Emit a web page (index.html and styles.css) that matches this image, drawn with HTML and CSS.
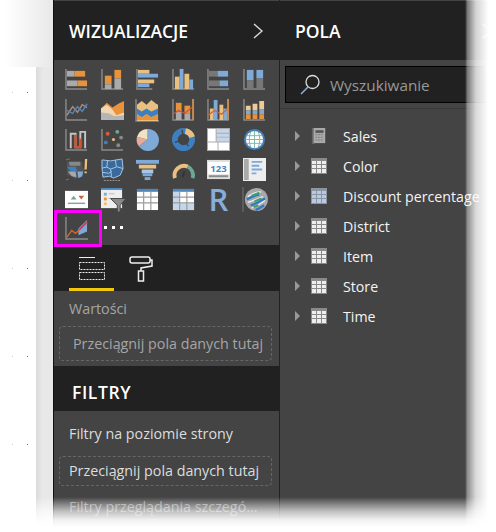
FILE: index.html
```html
<!DOCTYPE html>
<html>

<head>
    <title>Wizualizacje i pola</title>
    <link rel="stylesheet" href="styles.css">
</head>

<body>
    <div class="screen">

        <div class="canvas">
            <div class="canvas-top"></div>
            <div class="canvas-row">
                <div class="page">
                    <div class="dots"><i></i><i></i></div>
                    <div class="dots"><i></i><i></i></div>
                    <div class="dots"><i></i><i></i></div>
                    <div class="dots"><i></i><i></i></div>
                    <div class="dots"><i></i><i></i></div>
                </div>
                <div class="gutter"></div>
            </div>
        </div>

        <aside class="viz">
            <header class="head">
                <h2>WIZUALIZACJE</h2>
                <svg class="chev" width="12" height="18" viewBox="0 0 12 18"><path d="M2 2l8 7-8 7" fill="none" stroke="#cfd8e0" stroke-width="1.4"/></svg>
            </header>

            <div class="gallery">
                <!-- row 1 -->
                <svg viewBox="0 0 24 24"><path d="M1 1v21h22" class="axis"/><rect x="2" y="3" width="8" height="6" fill="#aaa"/><rect x="10" y="3" width="11" height="6" fill="#e8923c"/><rect x="2" y="13" width="11" height="6" fill="#aaa"/><rect x="13" y="13" width="10" height="6" fill="#e8923c"/></svg>
                <svg viewBox="0 0 24 24"><path d="M1 1v21h22" class="axis"/><rect x="4" y="8" width="7" height="9" fill="#e8923c"/><rect x="4" y="17" width="7" height="5" fill="#aaa"/><rect x="14" y="2" width="7" height="9" fill="#e8923c"/><rect x="14" y="11" width="7" height="11" fill="#aaa"/></svg>
                <svg viewBox="0 0 24 24"><path d="M1 1v21h16" class="axis"/><rect x="2" y="2" width="12" height="4" fill="#e9c07f"/><rect x="2" y="6" width="21" height="4" fill="#7fa9d6"/><rect x="2" y="12" width="17" height="4" fill="#e9c07f"/><rect x="2" y="16" width="12" height="4" fill="#7fa9d6"/></svg>
                <svg viewBox="0 0 24 24"><path d="M1 1v21h22" class="axis"/><rect x="3" y="9" width="5" height="13" fill="#e9c07f"/><rect x="8" y="1" width="4" height="21" fill="#7fa9d6"/><rect x="13" y="6" width="5" height="16" fill="#e9c07f"/><rect x="18" y="12" width="4" height="10" fill="#7fa9d6"/></svg>
                <svg viewBox="0 0 24 24"><path d="M1 1v21h22" class="axis"/><rect x="2" y="3" width="9" height="6" fill="#777"/><rect x="11" y="3" width="11" height="6" fill="#7fa9d6"/><rect x="2" y="13" width="11" height="6" fill="#777"/><rect x="13" y="13" width="9" height="6" fill="#7fa9d6"/></svg>
                <svg viewBox="0 0 24 24"><path d="M1 1v21h22" class="axis"/><rect x="4" y="2" width="7" height="11" fill="#7fa9d6"/><rect x="4" y="13" width="7" height="9" fill="#777"/><rect x="14" y="2" width="7" height="9" fill="#7fa9d6"/><rect x="14" y="11" width="7" height="11" fill="#777"/></svg>
                <!-- row 2 -->
                <svg viewBox="0 0 24 24"><path d="M1 1v22h22" class="axis"/><path d="M2 18l6-9 5 6 5-8 5 3" fill="none" stroke="#b08a78" stroke-width="1.5"/><path d="M2 13l6 3 5-7 5 5 5-8" fill="none" stroke="#4d86c0" stroke-width="1.5"/></svg>
                <svg viewBox="0 0 24 24"><path d="M0 11l6-6 6 5 6-4 6-3v20H0z" fill="#e8923c"/><path d="M0 11l6-4 6 5 4 6 8-3v7H0z" fill="#f2d6b0"/><path d="M0 15l8 1 6 3 10-1v5H0z" fill="#b5b5b5"/></svg>
                <svg viewBox="0 0 24 24"><path d="M0 1v23h24" class="axis"/><path d="M1 7l5-4 5 4 5-5 5 4 2 1v17H1z" fill="#e9c07f"/><path d="M1 11l5 3 5-3 5 3 7-3v6l-7 3-5-3-5 3-5-3z" fill="#3e7fc0"/><path d="M1 17l5 3 5-3 5 3 7-3v6H1z" fill="#e8923c"/></svg>
                <svg viewBox="0 0 24 24"><path d="M1 1v22h21V1" class="axis"/><rect x="4" y="14" width="6" height="9" fill="#aaa"/><rect x="4" y="5" width="6" height="9" fill="#e8923c"/><rect x="13" y="16" width="6" height="7" fill="#aaa"/><rect x="13" y="8" width="6" height="8" fill="#e8923c"/><path d="M1 17l6-4 6 3 8-6" fill="none" stroke="#c9553a" stroke-width="1.2"/><path d="M22 1v22" stroke="#c98a4a" stroke-width="2"/></svg>
                <svg viewBox="0 0 24 24"><path d="M1 1v22h21V1" class="axis"/><rect x="3" y="11" width="4" height="12" fill="#e9c07f"/><rect x="7" y="2" width="4" height="21" fill="#7fa9d6"/><rect x="13" y="7" width="4" height="16" fill="#e9c07f"/><rect x="17" y="11" width="4" height="12" fill="#7fa9d6"/><path d="M1 18l7-5 7 4 7-6" fill="none" stroke="#d2603c" stroke-width="1.2"/><path d="M22 1v22" stroke="#c98a4a" stroke-width="2"/></svg>
                <svg viewBox="0 0 24 24"><path d="M1 1v22h22" class="axis"/><path d="M3 8h5v5H3zM10 6h5v7h-5zM17 3h5v9h-5z" fill="#eccb94"/><path d="M3 13h5v4H3zM10 13h5v4h-5zM17 12h5v5h-5z" fill="#7fa9d6"/><path d="M3 17h5v5H3zM10 17h5v5h-5zM17 17h5v5h-5z" fill="#e8923c"/></svg>
                <!-- row 3 -->
                <svg viewBox="0 0 24 24"><path d="M1 1v22h22" class="axis"/><path d="M6 21V6h5v14h5V4h5v17" fill="none" stroke="#c4c4c4" stroke-width="2"/><path d="M11 7v13h5v-9" fill="none" stroke="#d5502e" stroke-width="2.4"/></svg>
                <svg viewBox="0 0 24 24"><path d="M1 1v22h22" class="axis"/><circle cx="7" cy="6" r="2" fill="#d2603c"/><circle cx="17" cy="4" r="2" fill="#6fa890"/><circle cx="5" cy="15" r="2" fill="#3e7fc0"/><circle cx="13" cy="12" r="1.6" fill="#e9c07f"/><circle cx="21" cy="10" r="2" fill="#8a8a8a"/><circle cx="18" cy="18" r="2" fill="#8a8a8a"/></svg>
                <svg viewBox="0 0 24 24"><path d="M12 12V1a11.500 11.500 0 1 1-9 18z" fill="#7fa9d6"/><path d="M12 12L3 19A11.500 11.500 0 0 1 1 9z" fill="#e6ab9a"/><path d="M12 12L1 9A11.500 11.500 0 0 1 12 1z" fill="#f2e2c4"/></svg>
                <svg viewBox="0 0 24 24"><circle cx="12" cy="12" r="9" fill="none" stroke="#3e7fc0" stroke-width="6"/><path d="M14 3.200a9 9 0 0 1 7 6.300" fill="none" stroke="#e9c07f" stroke-width="6"/><path d="M10.500 2l1 6" stroke="#444" stroke-width="1.500"/><path d="M3 15l6-2M17 19l-3-6" stroke="#444" stroke-width="1.500"/></svg>
                <svg viewBox="0 0 24 24"><rect x="0" y="0" width="24" height="24" fill="#aaa"/><path d="M1 1h8v13H1zM1 15h10v8H1zM12 15h11v8H12z" fill="#fff"/><path d="M10 1h13v4H10zM10 6h13v3H10zM10 10h13v4H10z" fill="#c5d6ea"/></svg>
                <svg viewBox="0 0 24 24"><circle cx="12" cy="12" r="11" fill="#3e7fc0"/><circle cx="12" cy="12" r="9" fill="#fff"/><path d="M4 8h16M3 12h18M4 16h16M12 3v18M8 4c-2 5-2 11 0 16M16 4c2 5 2 11 0 16" fill="none" stroke="#7fb5a5" stroke-width="1"/></svg>
                <!-- row 4 -->
                <svg viewBox="0 0 24 24"><path d="M1 2l4-1M1 23l3-1" stroke="#777"/><path d="M2 4h16v6l2 1v3l-4 1-1 5-5 2-2-3-6-1z" fill="#555"/><path d="M2 9h9l2 5H6z" fill="#3e7fc0"/><path d="M13 14h6l-1 5-4 2z" fill="#7fa9d6"/><path d="M3 14h8l1 6-5-1z" fill="#a8a8a8"/><path d="M4 4h12v4H5z" fill="#888"/><path d="M22 1l-.5 11M21.500 14v2" stroke="#e9c07f" stroke-width="2.400"/></svg>
                <svg viewBox="0 0 24 24"><path d="M1 2l9 1 12-2 1 10-3 7-7 3-4-2-7 1-1-10z" fill="#3a6a9c"/><path d="M1 2l9 1 12-2 1 10-3 7-7 3-4-2-7 1-1-10zM7 2.500l-1 7-5 1M15 2l1 7 7 2M6 9.500l4 2 6-2M10 11.500l1 8M2 15l6 1 3-2" fill="none" stroke="#a9c6e6" stroke-width="1"/><path d="M3 23.500h18" stroke="#999" stroke-width="1" stroke-dasharray="2 1"/></svg>
                <svg viewBox="0 0 24 24"><rect x="0" y="2" width="24" height="4" fill="#7fa9d6"/><rect x="3" y="7" width="18" height="4" fill="#e9c07f"/><rect x="6" y="12" width="12" height="4" fill="#a9c6e6"/><rect x="7" y="16" width="10" height="3" fill="#7fa9d6"/><rect x="9" y="20" width="6" height="3" fill="#7fa9d6"/></svg>
                <svg viewBox="0 0 24 24"><path d="M3 21a10 10 0 0 1 13.500-12" fill="none" stroke="#e9c07f" stroke-width="4"/><path d="M16.500 9a10 10 0 0 1 5 12" fill="none" stroke="#6fa890" stroke-width="4"/><path d="M11 20l2-6" stroke="#333" stroke-width="2"/></svg>
                <svg viewBox="0 0 24 24"><rect x="0" y="2" width="24" height="20" fill="#ddd"/><rect x="1" y="4" width="22" height="13" fill="#fff"/><text x="12" y="14.500" class="kpi">123</text><path d="M2 19h20" stroke="#8a8a8a" stroke-width="2"/></svg>
                <svg viewBox="0 0 24 24"><rect x="0" y="0" width="24" height="24" fill="#eee"/><rect x="1" y="1" width="5" height="22" fill="#aaa"/><path d="M9 4h11M9 8h8M9 12h11M9 16h5" stroke="#7fa9d6" stroke-width="2"/></svg>
                <!-- row 5 -->
                <svg viewBox="0 0 24 24"><rect x="0" y="3" width="24" height="18" fill="#fff"/><path d="M6 12l3-4 3 4z" fill="#6fa890"/><path d="M14 8h6l-3 4z" fill="#d2603c"/><path d="M3 16h18" stroke="#999" stroke-width="1.500"/></svg>
                <svg viewBox="0 0 24 24"><rect x="0" y="0" width="22" height="21" fill="#eee"/><rect x="0" y="0" width="22" height="2" fill="#4d86c0"/><rect x="3" y="5" width="3" height="3" fill="#7fa9d6"/><rect x="3" y="10" width="3" height="3" fill="#e8923c"/><rect x="3" y="15" width="3" height="3" fill="#e9c07f"/><path d="M8 6h6M8 11h3" stroke="#bbb"/><path d="M10 11h16l-6 7v7h-3v-7z" fill="#8a8a8a" stroke="#444"/></svg>
                <svg viewBox="0 0 24 24"><rect x="1" y="1" width="22" height="22" fill="#fff"/><rect x="1" y="1" width="22" height="3" fill="#4d86c0"/><path d="M1 9.500h22M1 15.500h22M8 4v19M15.500 4v19" stroke="#999" stroke-width="1.200"/></svg>
                <svg viewBox="0 0 24 24"><rect x="1" y="1" width="22" height="22" fill="#fff"/><rect x="1" y="1" width="22" height="3" fill="#4d86c0"/><rect x="1" y="16" width="22" height="7" fill="#c5d6ea"/><rect x="1" y="4" width="7" height="12" fill="#c5d6ea"/><path d="M1 9.500h22M1 15.500h22M8 4v19M15.500 4v19" stroke="#999" stroke-width="1.200"/></svg>
                <div class="r-icon">R</div>
                <svg viewBox="0 0 24 24"><path d="M0 -1v26" stroke="#777"/><circle cx="14" cy="12" r="12" fill="#a8a8a8"/><path d="M5 9c4-3 9-5 14-5M5 15c5-1 10-4 16-6M9 21c5-2 10-5 14-8" fill="none" stroke="#e8eef4" stroke-width="1.400"/><path d="M4 12c4-2 9-5 13-5M8 18c5-1 9-4 15-7M13 23c3-1 6-3 9-5" fill="none" stroke="#2f78c4" stroke-width="2.200"/><path d="M9 8l8-3M12 14l7-3M11 20l5-2" fill="none" stroke="#3fa06e" stroke-width="2.200"/></svg>
                <!-- row 6 -->
                <div class="picked">
                    <svg viewBox="0 0 24 24"><path d="M1 0v23h23" class="axis"/><path d="M14 12l9-9v12l-9 4z" fill="#7fa9d6"/><path d="M2 21l5-7 4 3 12-11" fill="none" stroke="#d5662e" stroke-width="1.500"/><path d="M15 13l8-8" stroke="#d8335a" stroke-width="1.500"/></svg>
                </div>
                <div class="more"><i></i><i></i><i></i></div>
            </div>

            <div class="tabs">
                <div class="tab active">
                    <svg width="26" height="26" viewBox="0 0 26 26" fill="none" stroke="#eee"><path d="M0 1.500h16"/><rect x=".5" y="6.500" width="25" height="7" stroke-dasharray="2 1"/><rect x=".5" y="16.500" width="25" height="7" stroke-dasharray="2 1"/></svg>
                </div>
                <div class="tab">
                    <svg width="26" height="26" viewBox="0 0 26 26" fill="none" stroke="#eee" stroke-width="1.500"><rect x="1" y="1" width="20" height="6" rx="2"/><path d="M21 4h2v6l-11 2v3"/><rect x="9.500" y="15" width="5" height="10"/></svg>
                </div>
            </div>

            <section class="well">
                <div class="well-label dim">Wartości</div>
                <div class="drop dim">Przeciągnij pola danych tutaj</div>
            </section>

            <header class="head head-filters">
                <h2>FILTRY</h2>
            </header>

            <section class="well well-filters">
                <div class="well-label">Filtry na poziomie strony</div>
                <div class="drop">Przeciągnij pola danych tutaj</div>
                <div class="well-label next">Filtry przeglądania szczegó...</div>
            </section>
        </aside>

        <aside class="fields">
            <header class="head">
                <h2>POLA</h2>
                <svg class="chev" width="12" height="18" viewBox="0 0 12 18"><path d="M2 2l8 7-8 7" fill="none" stroke="#cfd8e0" stroke-width="1.400"/></svg>
            </header>

            <div class="search-wrap">
                <div class="search">
                    <svg width="20" height="22" viewBox="0 0 20 22" fill="none"><circle cx="12.500" cy="8" r="6.500" stroke="#ddd" stroke-width="1.300"/><path d="M8 13l-7 7" stroke="#8fb4d8" stroke-width="1.500"/></svg>
                    <span>Wyszukiwanie</span>
                </div>
            </div>

            <ul class="tree">
                <li><span class="caret"></span>
                    <svg class="ficon" viewBox="0 0 16 18"><rect x="0" y="0" width="3" height="18" fill="#666"/><rect x="2" y="0" width="13" height="17" fill="#aaa"/><rect x="4" y="2.500" width="9" height="3" fill="#555"/><path d="M4 7.500h9M4 10.500h9M4 13.500h9" stroke="#777" stroke-dasharray="2 1"/></svg>
                    Sales</li>
                <li><span class="caret"></span>
                    <svg class="ficon" viewBox="0 0 16 16"><use href="#tbl"/></svg>
                    Color</li>
                <li><span class="caret"></span>
                    <svg class="ficon" viewBox="0 0 16 16"><rect width="16" height="16" fill="#8c96a3"/><path d="M1 3h14v12H1z" fill="#b9cbe3"/><path d="M1 6.500h14M1 10.500h14M5.500 3v12M10.500 3v12" stroke="#8c96a3"/></svg>
                    Discount percentage</li>
                <li><span class="caret"></span>
                    <svg class="ficon" viewBox="0 0 16 16"><use href="#tbl"/></svg>
                    District</li>
                <li><span class="caret"></span>
                    <svg class="ficon" viewBox="0 0 16 16"><use href="#tbl"/></svg>
                    Item</li>
                <li><span class="caret"></span>
                    <svg class="ficon" viewBox="0 0 16 16"><use href="#tbl"/></svg>
                    Store</li>
                <li><span class="caret"></span>
                    <svg class="ficon" viewBox="0 0 16 16"><use href="#tbl"/></svg>
                    Time</li>
            </ul>
        </aside>

        <div class="fade-right"></div>
        <div class="fade-bottom"></div>

        <svg class="defs" width="0" height="0">
            <symbol id="tbl" viewBox="0 0 16 16">
                <rect width="16" height="16" fill="#8a8a8a"/>
                <path d="M1 3h14v12H1z" fill="#eee"/>
                <path d="M1 6.500h14M1 10.500h14M5.500 3v12M10.500 3v12" stroke="#8a8a8a"/>
            </symbol>
        </svg>
    </div>
</body>

</html>
```

FILE: styles.css
```css
html, body {
    margin: 0;
    padding: 0;
    background: white;
}

.screen {
    position: relative;
    display: flex;
    width: 496px;
    height: 532px;
    overflow: hidden;
    font-family: "Open Sans", "Noto Sans", sans-serif;
    font-size: 14.3px;
    color: white;
}

/* report page behind the panels */
.canvas {
    width: 53px;
    flex: none;
}

.canvas-top {
    height: 67px;
    background: linear-gradient(to right, white 10%, #e8e8e8);
}

.canvas-row {
    display: flex;
    height: 465px;
}

.page {
    width: 36px;
    background: white;
    display: flex;
    flex-direction: column;
    gap: 87px;
    padding-top: 25px;
    box-sizing: border-box;
}

.gutter {
    flex: 1;
    background: linear-gradient(to right, #dcdcdc, #e8e8e8 40%);
}

.dots {
    display: flex;
    gap: 14px;
    padding-left: 12px;
}

.dots i {
    width: 1px;
    height: 1px;
    background: #777;
}

.dots i:first-child {
    background: #ccc;
}

.viz {
    width: 227px;
    flex: none;
    box-sizing: border-box;
    border-left: 1px solid #111;
    border-right: 1px solid #222;
    background: #444;
}

.fields {
    width: 216px;
    flex: none;
    background: #444;
}

.head {
    height: 59px;
    margin-top: 1px;
    background: #212121;
    display: flex;
    align-items: center;
    justify-content: space-between;
    padding: 0 15px;
}

.fields .head {
    padding-right: 3px;
}

.head h2 {
    margin: 0;
    font-size: 17.5px;
    font-weight: 600;
}

.gallery {
    display: grid;
    grid-template-columns: repeat(6, 23px);
    grid-auto-rows: 23px;
    column-gap: 12.5px;
    row-gap: 7px;
    height: 185px;
    box-sizing: border-box;
    padding: 8px 0 0 11px;
}

.gallery svg {
    width: 23px;
    height: 23px;
    display: block;
    overflow: visible;
}

.axis {
    fill: none;
    stroke: #8a8a8a;
    stroke-width: 1.5;
}

.kpi {
    font-size: 10px;
    font-weight: 700;
    fill: #4d86c0;
    text-anchor: middle;
}

.r-icon {
    font-size: 31px;
    font-weight: 600;
    line-height: 23px;
    color: #86aedb;
    text-align: center;
}

.picked {
    width: 34px;
    height: 31px;
    margin: -8px 0 0 -11px;
    border: 3px solid #ff00ff;
    display: flex;
    align-items: center;
    padding-left: 8px;
}

.more {
    display: flex;
    gap: 5px;
    align-items: center;
    margin: -2px 0 0 3px;
    height: 23px;
}

.more i {
    flex: none;
    width: 3px;
    height: 3px;
    background: white;
}

.tabs {
    height: 46px;
    background: #212121;
    display: flex;
    padding-left: 15px;
    gap: 5px;
}

.tab {
    width: 45px;
    height: 46px;
    display: flex;
    justify-content: center;
    padding-top: 11px;
    box-sizing: border-box;
    border-bottom: 3px solid transparent;
}

.tab.active {
    border-bottom-color: #f2c80f;
}

.well {
    height: 75px;
    padding: 8px 7px 0 5px;
    box-sizing: border-box;
}

.well-label {
    padding-left: 10px;
    line-height: 20px;
}

.dim {
    color: #a6a6a6;
}

.drop {
    margin-top: 7px;
    height: 35px;
    line-height: 33px;
    box-sizing: border-box;
    border: 1px dashed #666;
    border-radius: 4px;
    padding-left: 13px;
    white-space: nowrap;
    overflow: hidden;
}

.head-filters {
    height: 45px;
    margin-top: 0;
    padding: 6px 0 0 18px;
    box-sizing: border-box;
}

.head-filters h2 {
    letter-spacing: .6px;
}

.well-filters {
    height: 130px;
    padding-top: 13px;
}

.well-filters .well-label {
    color: #ddd;
}

.well-filters .drop {
    height: 30px;
    line-height: 28px;
    margin-top: 12px;
    padding-left: 9px;
    color: #ddd;
}

.well-filters .well-label.next {
    margin-top: 11px;
    color: #999;
}

.search-wrap {
    height: 49px;
    padding: 6px 0 0 5px;
    box-sizing: border-box;
    border-bottom: 1px solid #3a3a3a;
}

.search {
    width: 200px;
    height: 37px;
    box-sizing: border-box;
    background: #212121;
    border: 1px solid #000;
    display: flex;
    align-items: center;
    gap: 10px;
    padding-left: 14px;
    font-size: 15.3px;
    color: #999;
}

.tree {
    list-style: none;
    margin: 0;
    padding: 12px 0 0 15px;
}

.tree li {
    height: 30px;
    display: flex;
    align-items: center;
    white-space: nowrap;
    color: #f4f4f4;
    font-size: 14.2px;
}

.caret {
    width: 0;
    height: 0;
    border-left: 5px solid #999;
    border-top: 5px solid transparent;
    border-bottom: 5px solid transparent;
    margin-right: 11px;
}

.ficon {
    width: 16px;
    height: 16px;
    margin-right: 16px;
}

.fade-right {
    position: absolute;
    top: 0;
    bottom: 0;
    left: 465px;
    width: 31px;
    background: linear-gradient(to right, rgba(255, 255, 255, 0), rgba(255, 255, 255, .4) 8%, rgba(255, 255, 255, .8) 35%, white 75%);
}

.fade-bottom {
    position: absolute;
    left: 0;
    right: 0;
    top: 497px;
    bottom: 0;
    background: linear-gradient(to bottom, rgba(255, 255, 255, 0), rgba(255, 255, 255, .25) 15%, rgba(255, 255, 255, .65) 40%, rgba(255, 255, 255, .92) 65%, white 85%);
}

.defs {
    position: absolute;
}
```
